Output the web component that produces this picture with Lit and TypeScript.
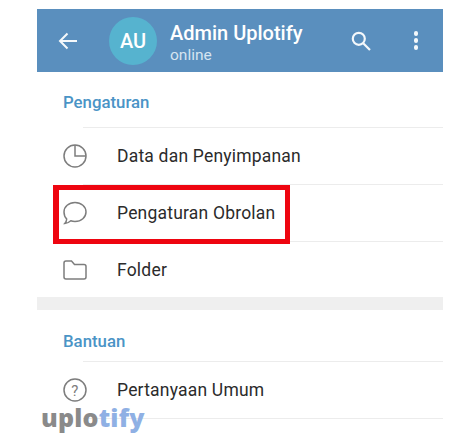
import { css, html, LitElement, svg } from "lit";
import { customElement } from "lit/decorators.js";

const pie = svg`<circle cx="12" cy="12" r="11" /><path d="M12 1v11h11" />`;
const bubble = svg`<path d="M12 1.500C18.300 1.500 23 5.800 23 11S18.300 20.500 12 20.500c-1.500 0-2.900-.2-4.200-.7C6.200 21.200 4 22.500 1.800 22.500c1-1 1.800-2.700 1.900-4.500C2 16.300 1 13.800 1 11 1 5.800 5.700 1.500 12 1.500z" />`;
const folder = svg`<path d="M1 5C1 3.800 1.800 3 3 3h5.500l3 3.500H21c1.200 0 2 .8 2 2V19c0 1.200-.8 2-2 2H3c-1.200 0-2-.8-2-2z" />`;

@customElement("app-root")
export class AppRoot extends LitElement {
  render() {
    return html`<div class="page">
      <div class="phone">
        <header class="bar">
          <svg class="back" viewBox="0 0 20 18">
            <path d="M19 9H2M9.500 1.500 2 9l7.500 7.500" />
          </svg>
          <div class="avatar">AU</div>
          <div class="who">
            <div class="name">Admin Uplotify</div>
            <div class="status">online</div>
          </div>
          <svg class="search" viewBox="0 0 20 20">
            <circle cx="7.800" cy="7.800" r="6" />
            <path d="M12.200 12.200 19 19" />
          </svg>
          <div class="dots"><i></i><i></i><i></i></div>
        </header>

        <div class="title first">Pengaturan</div>
        <div class="row">
          <svg class="icon" viewBox="0 0 24 24">${pie}</svg>
          <span>Data dan Penyimpanan</span>
        </div>
        <div class="row">
          <svg class="icon" viewBox="0 0 24 24">${bubble}</svg>
          <span>Pengaturan Obrolan</span>
        </div>
        <div class="row short">
          <svg class="icon" viewBox="0 0 24 24">${folder}</svg>
          <span>Folder</span>
        </div>

        <div class="gap"></div>

        <div class="title second">Bantuan</div>
        <div class="row last">
          <svg class="icon" viewBox="0 0 24 24">
            <circle cx="12" cy="12" r="11" />
            <text x="12" y="17.500" text-anchor="middle">?</text>
          </svg>
          <span>Pertanyaan Umum</span>
        </div>
      </div>

      <div class="highlight"></div>
      <div class="mark">uplo<span>tify</span></div>
    </div>`;
  }

  static styles = css`
    :host {
      display: block;
    }

    .page {
      position: relative;
      width: 474px;
      height: 448px;
      overflow: hidden;
      background: #fff;
      font-family: Roboto, "Liberation Sans", sans-serif;
    }

    .phone {
      width: 406px;
      margin-left: 37px;
      padding-top: 9px;
    }

    .bar {
      display: flex;
      align-items: center;
      height: 63px;
      background: #5a8fbe;
      color: #fff;
    }

    .back {
      width: 20px;
      height: 18px;
      margin-left: 21px;
      fill: none;
      stroke: #f4f8fb;
      stroke-width: 2;
    }

    .avatar {
      width: 48px;
      height: 48px;
      margin-left: 31px;
      border-radius: 50%;
      background: #56b3cf;
      text-align: center;
      font-size: 20px;
      font-weight: 500;
      line-height: 48px;
    }

    .who {
      flex: 1;
      margin-left: 13px;
      margin-top: 4px;
    }

    .name {
      font-size: 20px;
      font-weight: 500;
      line-height: 24px;
    }

    .status {
      font-size: 15.500px;
      line-height: 20px;
      color: #d5e4f0;
    }

    .search {
      width: 20px;
      height: 20px;
      margin-right: 43px;
      fill: none;
      stroke: #f4f8fb;
      stroke-width: 2.200;
    }

    .dots {
      display: flex;
      flex-direction: column;
      gap: 2.500px;
      margin-right: 25px;
    }

    .dots i {
      width: 4.500px;
      height: 4.500px;
      border-radius: 50%;
      background: #f4f8fb;
    }

    .title {
      display: flex;
      align-items: center;
      box-sizing: border-box;
      padding-left: 26px;
      color: #4a94c6;
      font-size: 16.800px;
      font-weight: 500;
    }

    .title.first {
      height: 55px;
      padding-top: 5px;
    }

    .title.second {
      height: 51px;
      padding-top: 10px;
    }

    .row {
      display: flex;
      align-items: center;
      height: 57px;
      color: #2b2b2b;
      font-size: 17.500px;
      letter-spacing: 0.2px;
      position: relative;
    }

    .row.short {
      height: 56px;
      padding-top: 1px;
      box-sizing: border-box;
    }

    .row::before {
      content: "";
      position: absolute;
      left: 46px;
      right: 0;
      top: 0;
      height: 1px;
      background: #ececec;
    }

    .row.last::after {
      content: "";
      position: absolute;
      left: 46px;
      right: 0;
      top: 57px;
      height: 1px;
      background: #ececec;
    }

    .icon {
      width: 24px;
      height: 24px;
      margin-left: 26px;
      margin-right: 30px;
      fill: none;
      stroke: #7d7d7d;
      stroke-width: 1.500;
    }

    .icon text {
      fill: #7d7d7d;
      stroke: none;
      font-size: 15px;
    }

    .gap {
      height: 13px;
      background: #efefef;
    }

    .highlight {
      position: absolute;
      left: 53px;
      top: 185px;
      width: 237px;
      height: 59px;
      box-sizing: border-box;
      border: 5px solid #ee0510;
      border-left-width: 6px;
    }

    .mark {
      position: absolute;
      left: 41px;
      top: 399px;
      color: #8a8a8a;
      font-family: "Open Sans", sans-serif;
      font-size: 25px;
      font-weight: 800;
      line-height: 36px;
      letter-spacing: 0.2px;
    }

    .mark span {
      color: #8fb0e4;
    }
  `;
}
